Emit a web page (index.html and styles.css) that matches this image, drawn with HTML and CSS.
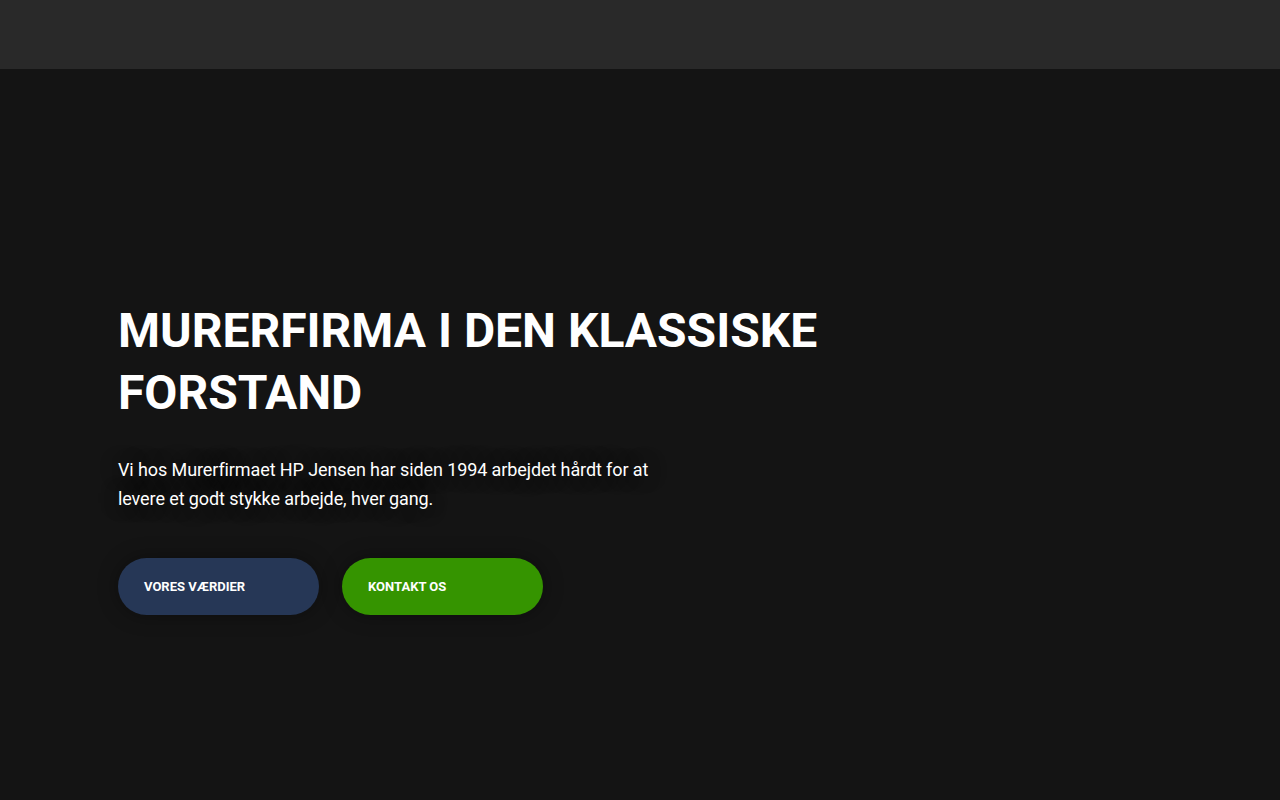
FILE: index.html
```html
<!DOCTYPE html>
<html lang="da">
<head>
    <meta charset="UTF-8">
    <meta name="viewport" content="width=device-width, initial-scale=1.0">
    <title>Murerfirmaet HP Jensen</title>
    <link rel="stylesheet" href="styles.css">
</head>
<body>
    <header class="topbar"></header>
    <section class="hero">
        <div class="hero-inner">
            <h1>Murerfirma i den klassiske forstand</h1>
            <p class="lead">Vi hos Murerfirmaet HP Jensen har siden 1994 arbejdet hårdt for at levere et godt stykke arbejde, hver gang.</p>
            <div class="buttons">
                <a href="#" class="btn btn-blue">Vores værdier</a>
                <a href="#" class="btn btn-green">Kontakt os</a>
            </div>
        </div>
    </section>
</body>
</html>
```

FILE: styles.css
```css
* {
    margin: 0;
    padding: 0;
    box-sizing: border-box;
    font-family: Roboto, "Liberation Sans", Arial, sans-serif;
}

body {
    background-color: #141414;
    color: #fff;
    min-height: 800px;
}

.topbar {
    height: 69px;
    background-color: #292929;
}

.hero {
    padding: 231px 118px 0;
}

.hero-inner {
    max-width: 760px;
}

.hero h1 {
    font-size: 48px;
    font-weight: 700;
    line-height: 62px;
    text-transform: uppercase;
}

.lead {
    margin-top: 31px;
    max-width: 560px;
    font-size: 18px;
    line-height: 29px;
    letter-spacing: -0.1px;
    text-shadow: 0 0 18px rgba(0, 0, 0, 0.7);
}

.buttons {
    display: flex;
    gap: 23px;
    margin-top: 45px;
}

.btn {
    display: flex;
    align-items: center;
    width: 201px;
    height: 57px;
    padding-left: 26px;
    border-radius: 29px;
    color: #fff;
    font-size: 13px;
    font-weight: 700;
    text-transform: uppercase;
    text-decoration: none;
    box-shadow: 0 0 20px rgba(0, 0, 0, 0.35);
}

.btn-blue {
    background-color: #263756;
}

.btn-green {
    background-color: #359400;
}
```
